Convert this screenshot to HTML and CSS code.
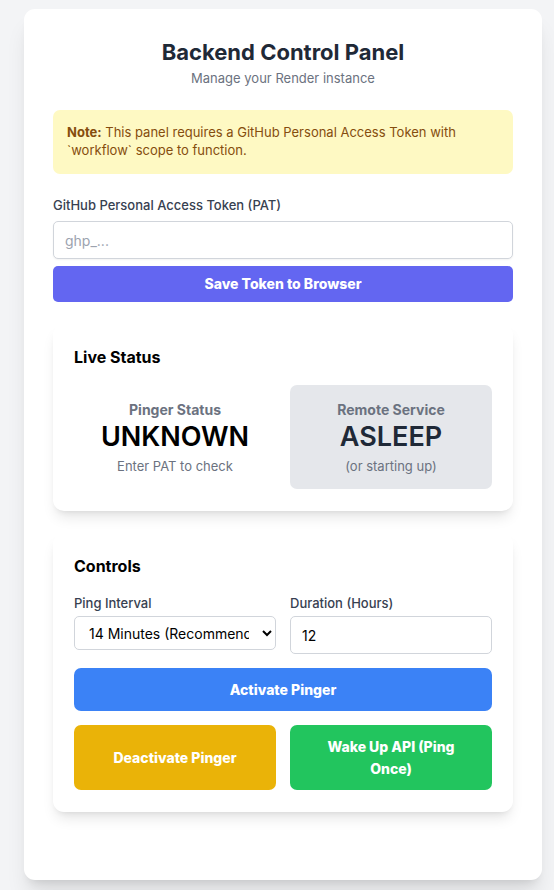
FILE: index.html
```html
<!DOCTYPE html>
<html lang="en">
<head>
<meta charset="utf-8">
<meta name="viewport" content="width=device-width, initial-scale=1">
<title>Backend Control Panel</title>
<link rel="stylesheet" href="styles.css">
</head>
<body>
<main class="panel">
  <header class="header">
    <h1 class="title">Backend Control Panel</h1>
    <p class="subtitle">Manage your Render instance</p>
  </header>

  <p class="note"><strong>Note:</strong> This panel requires a GitHub Personal Access Token with `workflow` scope to function.</p>

  <form class="token">
    <label class="label" for="pat">GitHub Personal Access Token (PAT)</label>
    <input class="field field-shadow" id="pat" type="password" placeholder="ghp_...">
    <button class="btn btn-save" type="button">Save Token to Browser</button>
  </form>

  <section class="card">
    <h2 class="card-title">Live Status</h2>
    <div class="grid">
      <div class="status">
        <h3 class="status-name">Pinger Status</h3>
        <p class="status-value">UNKNOWN</p>
        <p class="status-hint">Enter PAT to check</p>
      </div>
      <div class="status status-asleep">
        <h3 class="status-name">Remote Service</h3>
        <p class="status-value">ASLEEP</p>
        <p class="status-hint">(or starting up)</p>
      </div>
    </div>
  </section>

  <section class="card">
    <h2 class="card-title">Controls</h2>
    <div class="grid">
      <div class="control">
        <label class="label" for="interval">Ping Interval</label>
        <select class="field select" id="interval">
          <option>14 Minutes (Recommended)</option>
        </select>
      </div>
      <div class="control">
        <label class="label" for="duration">Duration (Hours)</label>
        <input class="field" id="duration" type="number" value="12">
      </div>
      <button class="btn btn-activate" type="button">Activate Pinger</button>
      <button class="btn btn-deactivate" type="button">Deactivate Pinger</button>
      <button class="btn btn-wake" type="button">Wake Up API (Ping Once)</button>
    </div>
  </section>
</main>
</body>
</html>
```
FILE: styles.css
```css
*,
*::before,
*::after {
  box-sizing: border-box;
}

body {
  margin: 0;
  padding: 9px 12px 10px 24px;
  background: #f3f4f6;
  color: #000;
  font: 14px/22px Inter, "Liberation Sans", sans-serif;
}

h1, h2, h3, p {
  margin: 0;
}

.panel {
  display: flex;
  flex-direction: column;
  gap: 22px;
  padding: 29px 29px 68px;
  background: #fff;
  border-radius: 11px;
  box-shadow: 0 18px 22px -4px rgba(0, 0, 0, 0.1), 0 7px 9px -5px rgba(0, 0, 0, 0.1);
}

.header {
  text-align: center;
}

.title {
  color: #1f2937;
  font-size: 22px;
  font-weight: 700;
  line-height: 29px;
}

.subtitle {
  margin-top: 1px;
  color: #6b7280;
  font-size: 13px;
  line-height: 20px;
}

.note {
  padding: 13px 14px 15px;
  border-radius: 7px;
  background: #fef9c3;
  color: #854d0e;
  font-size: 13px;
  line-height: 18px;
}

.token {
  display: flex;
  flex-direction: column;
  gap: 7px;
}

.label {
  color: #374151;
  font-size: 13px;
  font-weight: 500;
  line-height: 18px;
}

.field {
  width: 100%;
  height: 38px;
  padding: 0 11px;
  border: 1px solid #d1d5db;
  border-radius: 5px;
  background: #fff;
  color: #000;
  font: inherit;
}

.field-shadow {
  box-shadow: 0 1px 2px rgba(0, 0, 0, 0.05);
}

.field::placeholder {
  color: #9ca3af;
}

.select {
  height: 34px;
  padding: 0 10px;
}

.btn {
  padding: 11px 22px 10px;
  border: 0;
  border-radius: 7px;
  color: #fff;
  font: inherit;
  font-weight: 800;
}

.btn-save {
  padding: 7px 14px;
  border-radius: 5px;
  background: #6366f1;
}

.card {
  padding: 22px 21px;
  border-radius: 11px;
  background: #fff;
  box-shadow: 0 9px 14px -3px rgba(0, 0, 0, 0.1), 0 4px 6px -4px rgba(0, 0, 0, 0.1);
}

.card-title {
  margin-bottom: 17px;
  font-size: 16px;
  font-weight: 700;
  line-height: 22px;
}

.grid {
  display: grid;
  grid-template-columns: repeat(2, minmax(0, 1fr));
  gap: 14px;
}

.status {
  padding: 14px;
  border-radius: 7px;
  text-align: center;
}

.status-asleep {
  background: #e5e7eb;
  color: #1f2937;
}

.status-name {
  color: #6b7280;
  font-size: 14px;
  font-weight: 700;
  line-height: 22px;
}

.status-value {
  font-size: 27px;
  font-weight: 600;
  line-height: 32px;
}

.status-hint {
  margin-top: 4px;
  color: #6b7280;
  font-size: 13px;
  line-height: 18px;
}

.control {
  display: flex;
  flex-direction: column;
  gap: 4px;
}

.btn-activate {
  grid-column: 1 / -1;
  background: #3b82f6;
}

.btn-deactivate {
  background: #eab308;
}

.btn-wake {
  background: #22c55e;
}
```
